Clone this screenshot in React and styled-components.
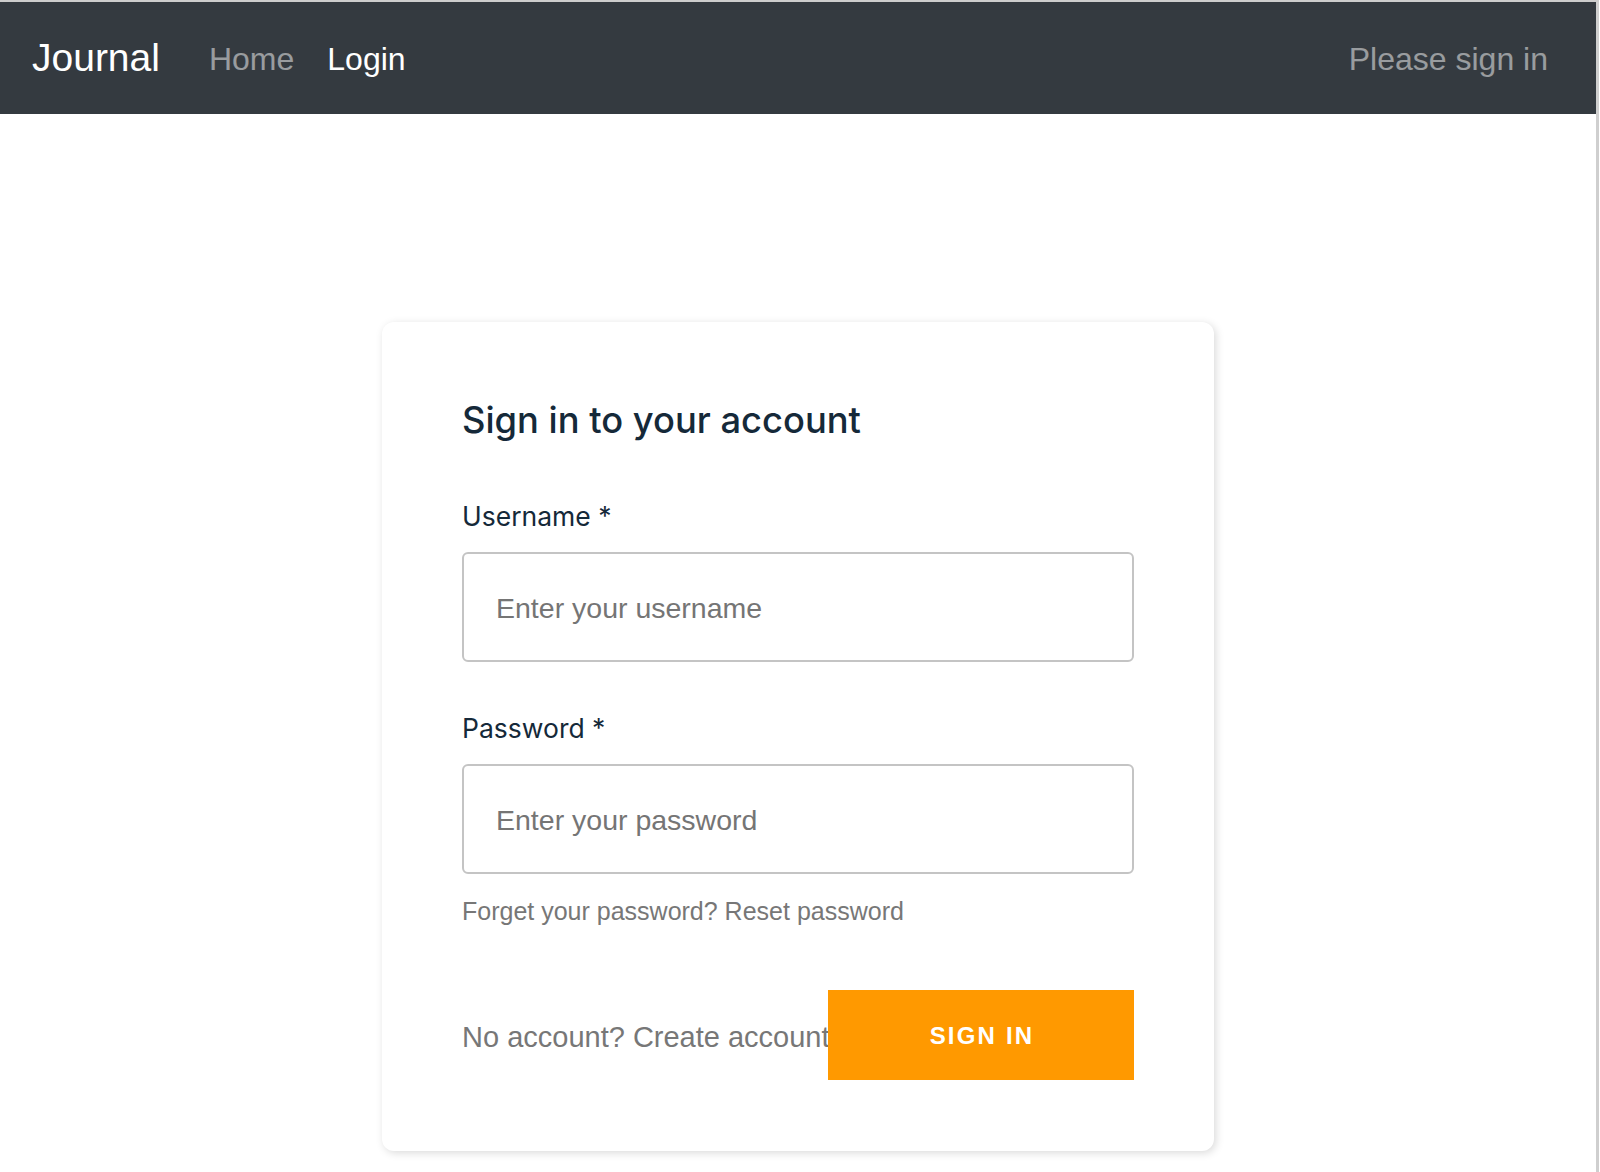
import React from 'react'
import styled, { createGlobalStyle } from 'styled-components'

const GlobalStyle = createGlobalStyle`
  html, body {
    margin: 0;
    padding: 0;
    background: #fff;
  }
  * {
    box-sizing: border-box;
  }
`

const Page = styled.div`
  width: 1599px;
  min-height: 1172px;
  border-top: 2px solid #cdcdcd;
  border-right: 3px solid #cfcfcf;
  font-family: "Liberation Sans", Arial, sans-serif;
`

const Navbar = styled.nav`
  height: 112px;
  display: flex;
  align-items: center;
  padding: 0 32px;
  background: #343a40;
`

const Brand = styled.a`
  font-size: 39px;
  line-height: 60px;
  color: #fff;
  margin-right: 33px;
  text-decoration: none;
`

const NavLink = styled.a`
  font-size: 32px;
  line-height: 48px;
  padding: 2px 17px 0 16px;
  color: ${p => (p.$active ? '#fff' : 'rgba(255, 255, 255, 0.5)')};
  text-decoration: none;
`

const NavText = styled.span`
  margin-left: auto;
  font-size: 32px;
  line-height: 48px;
  padding: 2px 16px 0;
  color: rgba(255, 255, 255, 0.5);
`

const Card = styled.section`
  width: 832px;
  margin: 208px auto 0;
  padding: 70px 80px 71px;
  background: #fff;
  border-radius: 12px;
  box-shadow: 2px 2px 8px 0 rgba(0, 0, 0, 0.15);
`

const Heading = styled.h2`
  margin: 0 0 50px;
  font-family: Inter, "Noto Sans", sans-serif;
  font-size: 36.3px;
  font-weight: 500;
  line-height: 56px;
  color: #152939;
`

const Field = styled.div`
  margin-bottom: ${p => p.$gap || 0}px;
`

const Label = styled.label`
  display: block;
  margin-bottom: 18px;
  font-family: Inter, "Noto Sans", sans-serif;
  font-size: 26.5px;
  line-height: 36px;
  color: #152939;
`

const Input = styled.input`
  display: block;
  width: 100%;
  height: 110px;
  padding: 3px 32px 0;
  border: 2px solid #c4c4c4;
  border-radius: 6px;
  background: #fff;
  font-family: "Liberation Sans", Arial, sans-serif;
  font-size: 28.5px;
  color: #152939;
  outline: none;
  &::placeholder {
    color: #757575;
  }
`

const Hint = styled.div`
  margin-top: 22px;
  font-size: 25px;
  line-height: 30px;
  color: #777;
`

const Footer = styled.div`
  display: flex;
  align-items: center;
  margin-top: 64px;
`

const FooterText = styled.span`
  flex: 1 1 0;
  min-width: 0;
  padding-top: 5px;
  white-space: nowrap;
  font-size: 29px;
  line-height: 35px;
  color: #777;
`

const Button = styled.button`
  flex: none;
  width: 306px;
  height: 90px;
  border: none;
  background: #ff9900;
  color: #fff;
  font-family: "Liberation Sans", Arial, sans-serif;
  font-size: 24px;
  font-weight: 700;
  letter-spacing: 2.2px;
  text-transform: uppercase;
  padding: 2px 0 0 2px;
  cursor: pointer;
`

export default function App() {
  return (
    <>
      <GlobalStyle />
      <Page>
        <Navbar>
          <Brand href="#">Journal</Brand>
          <NavLink href="#">Home</NavLink>
          <NavLink href="#" $active>Login</NavLink>
          <NavText>Please sign in</NavText>
        </Navbar>
        <Card>
          <Heading>Sign in to your account</Heading>
          <Field $gap={48}>
            <Label>Username *</Label>
            <Input placeholder="Enter your username" />
          </Field>
          <Field>
            <Label>Password *</Label>
            <Input type="password" placeholder="Enter your password" />
          </Field>
          <Hint>Forget your password? Reset password</Hint>
          <Footer>
            <FooterText>No account? Create account</FooterText>
            <Button>Sign In</Button>
          </Footer>
        </Card>
      </Page>
    </>
  )
}
